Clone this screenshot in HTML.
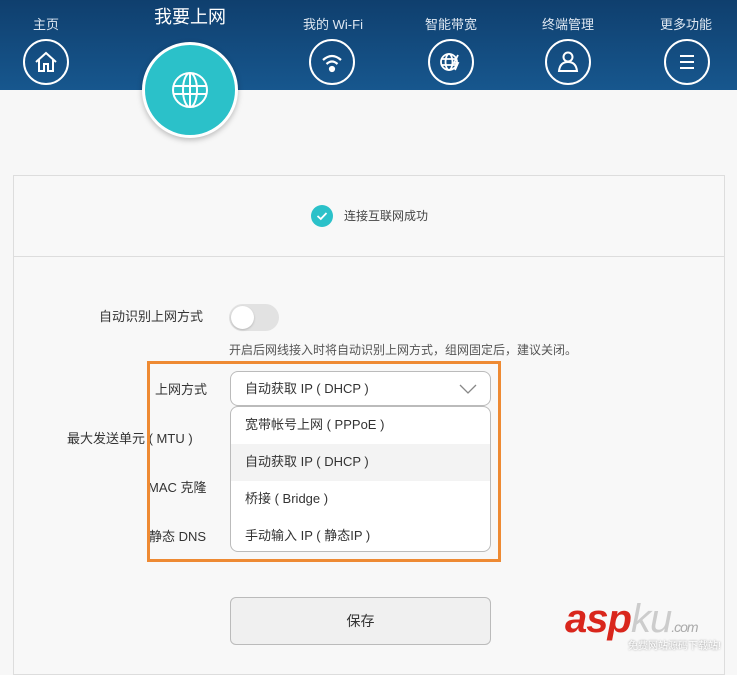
<!DOCTYPE html><html><head><meta charset="utf-8"><style>
*{margin:0;padding:0;box-sizing:border-box}
body{width:737px;height:653px;overflow:hidden;background:#f7f7f7;font-family:"Liberation Sans","Noto Sans CJK SC",sans-serif;position:relative;color:#333}
.hd{position:absolute;left:0;top:0;width:737px;height:90px;background:linear-gradient(#0f3f6e,#17578e)}
.lb{position:absolute;color:#dfe8f2;font-size:13px;transform:translateX(-50%);top:14px;white-space:nowrap}
.ic{position:absolute;width:46px;height:46px;border:2px solid #fff;border-radius:50%;top:39px;margin-left:-23px}
.ic svg{position:absolute;left:1px;top:1px}
.big{position:absolute;left:142px;top:42px;width:96px;height:96px;border-radius:50%;background:#2bc1c9;border:3px solid #fff;box-shadow:0 2px 6px rgba(0,0,0,.25)}
.panel{position:absolute;left:13px;top:175px;width:712px;height:500px;border:1px solid #ddd;background:#f8f8f8}
.div{position:absolute;left:13px;top:256px;width:712px;height:1px;background:#ddd}
.t{position:absolute;font-size:13px;color:#333;white-space:nowrap}
.sel{position:absolute;left:230px;top:371px;width:261px;height:35px;border:1px solid #bbb;border-radius:8px;background:#fff}
.dd{position:absolute;left:230px;top:406px;width:261px;height:146px;border:1px solid #bbb;border-radius:8px;background:#fff;overflow:hidden}
.dd div{height:37px;line-height:35px;padding-left:14px;font-size:13px}
</style></head><body>
<div class="hd"></div>
<div class="lb" style="left:46px">主页</div>
<div class="lb" style="left:190px;top:3px;font-size:18px;color:#fff">我要上网</div>
<div class="lb" style="left:333px">我的 Wi-Fi</div>
<div class="lb" style="left:451px">智能带宽</div>
<div class="lb" style="left:568px">终端管理</div>
<div class="lb" style="left:686px">更多功能</div>
<div class="ic" style="left:46px"><svg width="40" height="40" viewBox="0 0 40 40" fill="none" stroke="#fff" stroke-width="2"><path d="M10 20 L20 11 L30 20 M13 18 V29 H18 V22 H22 V29 H27 V18"/></svg></div>
<div class="ic" style="left:332px"><svg width="40" height="40" viewBox="0 0 40 40" fill="none" stroke="#fff" stroke-width="2.2"><path d="M11 18 Q20 10 29 18 M14.5 22 Q20 17 25.5 22"/><circle cx="20" cy="27" r="2" fill="#fff"/></svg></div>
<div class="ic" style="left:451px"><svg width="40" height="40" viewBox="0 0 40 40" fill="none" stroke="#fff" stroke-width="1.8"><circle cx="18" cy="20" r="8"/><ellipse cx="18" cy="20" rx="3.5" ry="8"/><path d="M10 17H26M10 23H26M27 13 L23 21 H27 L24 28"/></svg></div>
<div class="ic" style="left:568px"><svg width="40" height="40" viewBox="0 0 40 40" fill="none" stroke="#fff" stroke-width="2"><circle cx="20" cy="15" r="4.5"/><path d="M11 29 Q12 20 20 20 Q28 20 29 29 Z"/></svg></div>
<div class="ic" style="left:687px"><svg width="40" height="40" viewBox="0 0 40 40" fill="none" stroke="#fff" stroke-width="2"><path d="M13 14H27M13 20H27M13 26H27"/></svg></div>
<div class="panel"></div>
<div class="div"></div>
<div class="big"><svg width="90" height="90" viewBox="0 0 90 90" fill="none" stroke="#fff" stroke-width="2"><circle cx="45" cy="45" r="17"/><ellipse cx="45" cy="45" rx="7" ry="17"/><path d="M45 28V62M28 41H62M28 49H62"/></svg></div>
<svg style="position:absolute;left:311px;top:205px" width="22" height="22"><circle cx="11" cy="11" r="11" fill="#2bc1c9"/><path d="M6.5 11 L9.8 14 L15.5 8" stroke="#fff" stroke-width="1.8" fill="none"/></svg>
<div class="t" style="left:344px;top:207px;font-size:12px;color:#444">连接互联网成功</div>
<div class="t" style="left:99px;top:306px">自动识别上网方式</div>
<div style="position:absolute;left:229px;top:304px;width:50px;height:27px;border-radius:14px;background:#e2e2e2"><div style="position:absolute;left:2px;top:2px;width:23px;height:23px;border-radius:50%;background:#fff;box-shadow:0 1px 2px rgba(0,0,0,.2)"></div></div>
<div class="t" style="left:229px;top:341px;font-size:12px;color:#555">开启后网线接入时将自动识别上网方式，组网固定后，建议关闭。</div>
<div class="t" style="left:155px;top:379px">上网方式</div>
<div class="t" style="left:67px;top:428px">最大发送单元 ( MTU )</div>
<div class="t" style="left:148px;top:477px">MAC 克隆</div>
<div class="t" style="left:149px;top:526px">静态 DNS</div>
<div class="sel"><div class="t" style="left:14px;top:6px">自动获取 IP ( DHCP )</div><svg style="position:absolute;left:228px;top:11px" width="18" height="12"><path d="M1 2 L9 10 L17 2" stroke="#888" stroke-width="1.3" fill="none"/></svg></div>
<div class="dd"><div>宽带帐号上网 ( PPPoE )</div><div style="background:#f3f3f3">自动获取 IP ( DHCP )</div><div>桥接 ( Bridge )</div><div>手动输入 IP ( 静态IP )</div></div>
<div style="position:absolute;left:147px;top:361px;width:354px;height:201px;border:3px solid #ee8a33"></div>
<div style="position:absolute;left:230px;top:597px;width:261px;height:48px;border:1px solid #bbb;border-radius:6px;background:#f0f0f0;text-align:center;line-height:46px;font-size:14px">保存</div>
<div style="position:absolute;left:565px;top:597px;font:italic bold 40px 'Liberation Sans',sans-serif;color:#d9261c;letter-spacing:-1px">asp<span style="color:#ccc;font-weight:normal">ku</span><span style="font-size:14px;color:#aaa;font-weight:normal">.com</span></div>
<div style="position:absolute;left:628px;top:637px;font-size:10px;color:#fff;text-shadow:0 0 2px #888">免费网站源码下载站!</div>
</body></html>
